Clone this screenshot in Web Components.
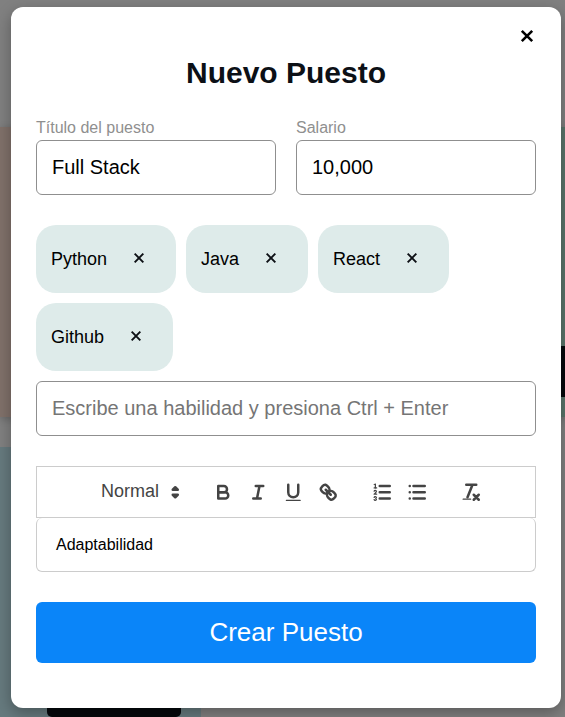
<!DOCTYPE html>
<html lang="es">
<head>
<meta charset="utf-8">
<title>Nuevo Puesto</title>
<style>
html,body{margin:0;height:717px;overflow:hidden;background:#808080;font-family:"Liberation Sans",Arial,sans-serif;color:#000}
</style>
</head>
<body>
<job-page></job-page>
<script>
const define=(name,html,setup)=>customElements.define(name,class extends HTMLElement{
  connectedCallback(){
    if(this.shadowRoot)return;
    this.attachShadow({mode:'open'}).innerHTML=html;
    if(setup)setup(this,this.shadowRoot);
  }
});

define('close-icon',`<style>:host{display:block;width:var(--size,20px);height:var(--size,20px)}svg{display:block;width:100%;height:100%;stroke-width:var(--weight,2.3)}</style>
<svg viewBox="0 0 24 24" fill="none" stroke="currentColor"><path d="M6.8 6.8L17.2 17.2M17.2 6.8L6.8 17.2"/></svg>`);

define('text-field',`<style>
:host{display:flex;flex-direction:column;min-width:0}
.label{font-size:16px;line-height:18px;color:#8f8f8f;padding-bottom:3px}
.box{box-sizing:border-box;height:55px;border:1px solid #8f8f8f;border-radius:6px;padding:0 15px;font-size:20px;line-height:53px;white-space:nowrap}
:host([hint]) .box{color:#757575}
</style><div class="label"></div><div class="box"><slot></slot></div>`,(el,r)=>{
  const l=r.querySelector('.label');
  if(el.getAttribute('label'))l.textContent=el.getAttribute('label');else l.remove();
});

define('skill-chip',`<style>
:host{display:flex;align-items:center;box-sizing:border-box;height:68px;padding:0 27px 0 15px;border-radius:20px;background:#deebea;font-size:18px;color:#0c0f14}
span{margin-right:22px;color:#000}
close-icon{margin-bottom:2px}
</style><span><slot></slot></span><close-icon></close-icon>`);

const glyphs={
bold:`<path class="s" d="M5,4H9.5A2.5,2.5,0,0,1,12,6.5v0A2.5,2.5,0,0,1,9.5,9H5V4Z"/><path class="s" d="M5,9h5.5A2.5,2.5,0,0,1,13,11.5v0A2.5,2.5,0,0,1,10.5,14H5V9Z"/>`,
italic:`<path class="s" d="M7,4H13M5,14H11M8,14L10,4"/>`,
underline:`<path class="s" d="M5,3V9a4.012,4.012,0,0,0,4,4H9a4.012,4.012,0,0,0,4-4V3"/><rect class="f" height="1" rx=".5" ry=".5" width="12" x="3" y="15"/>`,
link:`<path class="s" d="M7,7L11,11"/><path class="s" d="M8.9,4.577a3.476,3.476,0,0,1,.36,4.679A3.476,3.476,0,0,1,4.577,8.9C3.185,7.5,2.035,6.4,4.217,4.217S7.5,3.185,8.9,4.577Z"/><path class="s" d="M13.423,9.1a3.476,3.476,0,0,0-4.679-.36,3.476,3.476,0,0,0,.36,4.679c1.392,1.392,2.5,2.542,4.679.36S14.815,10.5,13.423,9.1Z"/>`,
ordered:`<path class="s" d="M7,4H15M7,9H15M7,14H15"/><path class="s thin" d="M2.5,5.5H4.5"/><path class="f" d="M3.5,6A0.5,0.5,0,0,1,3,5.5V3.085l-0.276.138A0.5,0.5,0,0,1,2.053,3c-0.124-.247-0.023-0.324.224-0.447l1-.5A0.5,0.5,0,0,1,4,2.5v3A0.5,0.5,0,0,1,3.5,6Z"/><path class="s thin" d="M4.5,10.5h-2c0-.234,1.85-1.076,1.85-2.234A0.959,0.959,0,0,0,2.5,8.156"/><path class="s thin" d="M2.5,14.846a0.959,0.959,0,0,0,1.85-.109A0.7,0.7,0,0,0,3.75,14a0.688,0.688,0,0,0,.6-0.736,0.959,0.959,0,0,0-1.85-.109"/>`,
bullet:`<path class="s" d="M6,4H15M6,9H15M6,14H15M3,4H3M3,9H3M3,14H3"/>`,
clean:`<path class="s" d="M5,3H13M6,13L10,3M11,11L15,15M15,11L11,15"/><rect class="f" height="1" rx=".5" ry=".5" width="7" x="2" y="14"/>`,
picker:`<polygon class="s" points="7 11 9 13 11 11 7 11"/><polygon class="s" points="7 7 9 5 11 7 7 7"/>`
};
define('tool-icon',`<style>
:host{display:flex;justify-content:center;width:35px}
svg{width:22.5px;height:22.5px;display:block}
.s{fill:none;stroke:#444;stroke-width:2;stroke-linecap:round;stroke-linejoin:round}
.thin{stroke-width:1}.f{fill:#444}
</style><svg viewBox="0 0 18 18"></svg>`,(el,r)=>{r.querySelector('svg').innerHTML=glyphs[el.getAttribute('name')]});

define('rich-editor',`<style>
:host{display:block}
.bar{box-sizing:border-box;height:52px;border:1px solid #ccc;display:flex;align-items:center;padding-left:64px}
.pick{display:flex;align-items:center;width:105px;font-size:18px;line-height:20px;color:#444}
.pick span{width:57px;padding-bottom:2px}
.pick tool-icon{width:35px}
.group{display:flex;margin-right:19px}
.body{box-sizing:border-box;height:54px;border:1px solid #ccc;border-top:0;border-radius:6px;padding:0 19px;font-size:16px;line-height:53px}
</style>
<div class="bar"><div class="pick"><span>Normal</span><tool-icon name="picker"></tool-icon></div>
<div class="group"><tool-icon name="bold"></tool-icon><tool-icon name="italic"></tool-icon><tool-icon name="underline"></tool-icon><tool-icon name="link"></tool-icon></div>
<div class="group"><tool-icon name="ordered"></tool-icon><tool-icon name="bullet"></tool-icon></div>
<div class="group"><tool-icon name="clean"></tool-icon></div></div>
<div class="body"><slot></slot></div>`);

define('action-button',`<style>:host{display:flex;align-items:center;justify-content:center;height:61px;border-radius:6px;background:#0a85f9;color:#fff;font-size:26px}</style><slot></slot>`);

define('modal-dialog',`<style>
:host{display:block;box-sizing:border-box;width:550px;height:701px;padding:16px 25px 0;border-radius:12px;background:#fff;box-shadow:0 5px 15px rgba(0,0,0,.3)}
header{display:flex;flex-direction:column}
close-icon{--size:24px;--weight:2.6;align-self:flex-end;margin:.5px -3px -.5px 0}
h1{margin:0;text-align:center;font-size:30px;line-height:34px;padding-top:9px;color:#0c1016}
main{display:flex;flex-direction:column;padding-top:29px}
</style><header><close-icon></close-icon><h1></h1></header><main><slot></slot></main>`,(el,r)=>{r.querySelector('h1').textContent=el.getAttribute('heading')});

define('board-backdrop',`<style>
:host{display:flex;justify-content:space-between;width:565px;height:717px;background:#808080}
.left{width:201px;padding-top:127px}
.pink{width:190px;height:290px;background:#80716a;box-shadow:0 2px 8px rgba(0,0,0,.2)}
.teal{height:270px;margin-top:30px;background:#667a7e;display:flex;align-items:flex-end}
.dark{width:134px;height:50px;margin-left:47px;border-radius:5px;background:#05080c}
.right{display:flex;width:10px;height:290px;margin-top:127px;background:#5a756b;box-shadow:0 2px 8px rgba(0,0,0,.2)}
.right .dark{width:10px;height:51px;margin:219px 0 0;border-radius:0}
</style><div class="left"><div class="pink"></div><div class="teal"><div class="dark"></div></div></div><div class="right"><div class="dark"></div></div>`);

define('job-page',`<style>
:host{display:block;position:relative;width:565px;height:717px;overflow:hidden}
modal-dialog{position:absolute;left:11px;top:7px}
.pair{display:grid;grid-template-columns:1fr 1fr;gap:20px}
.skills{display:flex;flex-wrap:wrap;gap:10px;margin:30px 0 10px}
rich-editor{margin:30px 0}
</style>
<board-backdrop></board-backdrop>
<modal-dialog heading="Nuevo Puesto">
<div class="pair"><text-field label="Título del puesto">Full Stack</text-field><text-field label="Salario">10,000</text-field></div>
<div class="skills"><skill-chip>Python</skill-chip><skill-chip>Java</skill-chip><skill-chip>React</skill-chip><skill-chip>Github</skill-chip></div>
<text-field hint>Escribe una habilidad y presiona Ctrl + Enter</text-field>
<rich-editor>Adaptabilidad</rich-editor>
<action-button>Crear Puesto</action-button>
</modal-dialog>`);
</script>
</body>
</html>
